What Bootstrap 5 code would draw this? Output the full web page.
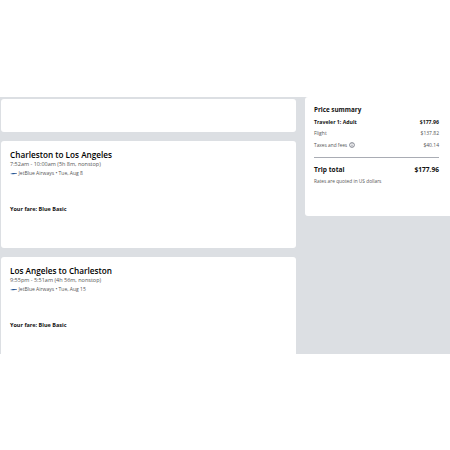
<!DOCTYPE html>
<html lang="en">
<head>
  <meta charset="UTF-8">
  <meta name="viewport" content="width=device-width, initial-scale=1">
  <title>Trip review</title>
  <link href="https://cdn.jsdelivr.net/npm/bootstrap@5.3.0/dist/css/bootstrap.min.css" rel="stylesheet">
  <style>
    body { background: #fff; font-family: "Open Sans", sans-serif; color: #111; }
    .top-gap { height: 97px; }
    .checkout { height: 257px; background: #dcdfe3; overflow: hidden; gap: 9px; }
    .col-left { width: 296px; padding: 2px 0 0 1px; gap: 9px; }
    .col-right { width: 145px; }
    .panel { background: #fff; border-radius: 3px; flex-shrink: 0; }
    .panel-empty { height: 33px; }
    .panel-flight { height: 107px; padding: 8px 9px; }
    .panel-flight h2 { font-size: 8.2px; font-weight: 600; line-height: 11px; margin: 0; color: #000; }
    .flight-meta { font-size: 5px; line-height: 9px; color: #555; }
    .flight-time { font-size: 5.5px; }
    .airline-row { gap: 1.5px; }
    .airline-mark { width: 7px; height: 3px; }
    .fare { font-size: 5.5px; font-weight: 700; line-height: 8px; margin-top: 27px; color: #111; }
    .panel-price { height: 119px; padding: 8px 11px 0 9px; border-radius: 3px 0 0 3px; }
    .price-title { font-size: 6.3px; font-weight: 700; line-height: 9px; color: #111; margin-bottom: 2px; }
    .price-row { font-size: 5px; line-height: 8px; color: #555; margin-top: 3.5px; }
    .price-row.strong { font-size: 5.2px; font-weight: 700; color: #111; }
    .tax-label { gap: 2px; font-size: 4.8px; }
    .info-mark { width: 6px; height: 6px; }
    .price-line { border-top: 1px solid #a9acb4; margin: 8px 0 7px; }
    .total-row { font-size: 6.6px; font-weight: 700; line-height: 10px; color: #111; }
    .rate-note { font-size: 4.8px; line-height: 8px; color: #555; margin-top: 2px; }
  </style>
</head>
<body>
  <div class="top-gap"></div>
  <div class="checkout d-flex">
    <div class="col-left d-flex flex-column flex-shrink-0">
      <div class="panel panel-empty"></div>
      <div class="panel panel-flight">
        <h2>Charleston to Los Angeles</h2>
        <div class="flight-meta flight-time">7:52am - 10:00am (5h 8m, nonstop)</div>
        <div class="flight-meta airline-row d-flex align-items-center">
          <svg class="airline-mark" viewBox="0 0 7 3"><path d="M0 2 L3 1 L7 1.2 L7 1.8 L3 2.2Z" fill="#1f4f8f"/></svg>
          <span>JetBlue Airways • Tue, Aug 8</span>
        </div>
        <div class="fare">Your fare: Blue Basic</div>
      </div>
      <div class="panel panel-flight">
        <h2>Los Angeles to Charleston</h2>
        <div class="flight-meta flight-time">9:55pm - 5:51am (4h 56m, nonstop)</div>
        <div class="flight-meta airline-row d-flex align-items-center">
          <svg class="airline-mark" viewBox="0 0 7 3"><path d="M0 2 L3 1 L7 1.2 L7 1.8 L3 2.2Z" fill="#1f4f8f"/></svg>
          <span>JetBlue Airways • Tue, Aug 15</span>
        </div>
        <div class="fare">Your fare: Blue Basic</div>
      </div>
    </div>
    <div class="col-right flex-grow-1">
      <div class="panel panel-price">
        <div class="price-title">Price summary</div>
        <div class="price-row strong d-flex justify-content-between"><span>Traveler 1: Adult</span><span>$177.96</span></div>
        <div class="price-row d-flex justify-content-between"><span>Flight</span><span>$137.82</span></div>
        <div class="price-row d-flex justify-content-between">
          <span class="tax-label d-flex align-items-center">Taxes and fees
            <svg class="info-mark" viewBox="0 0 6 6"><circle cx="3" cy="3" r="2.4" fill="none" stroke="#3c4152" stroke-width=".6"/><path d="M3 2.6v1.9M3 1.4v.7" stroke="#3c4152" stroke-width=".6"/></svg>
          </span>
          <span>$40.14</span>
        </div>
        <div class="price-line"></div>
        <div class="total-row d-flex justify-content-between"><span>Trip total</span><span>$177.96</span></div>
        <div class="rate-note">Rates are quoted in US dollars</div>
      </div>
    </div>
  </div>
  <script src="https://cdn.jsdelivr.net/npm/bootstrap@5.3.0/dist/js/bootstrap.bundle.min.js"></script>
</body>
</html>
